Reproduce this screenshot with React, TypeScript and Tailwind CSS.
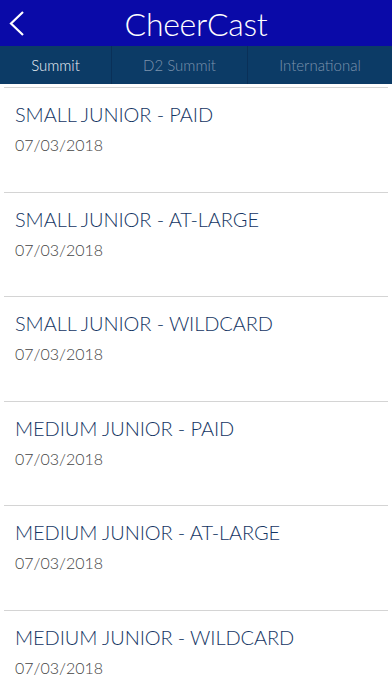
const TABS = ['Summit', 'D2 Summit', 'International']

const EVENTS = [
  'SMALL JUNIOR - PAID',
  'SMALL JUNIOR - AT-LARGE',
  'SMALL JUNIOR - WILDCARD',
  'MEDIUM JUNIOR - PAID',
  'MEDIUM JUNIOR - AT-LARGE',
  'MEDIUM JUNIOR - WILDCARD',
]

const FONT = { fontFamily: '"Lato", "Open Sans", sans-serif' }

export default function App() {
  return (
    <div className="w-[392px] h-[696px] overflow-hidden bg-white" style={FONT}>
      {/* Nav bar */}
      <div className="relative h-[46px] bg-[#0a0aa8] flex items-center justify-center">
        <button type="button" className="absolute left-[6px] top-[10px] w-[20px] h-[27px]">
          <svg viewBox="0 0 20 27" className="w-[20px] h-[27px]" fill="none" stroke="white" strokeWidth="2.2">
            <path d="M17 2 L5 13.5 L17 25" />
          </svg>
        </button>
        <span className="text-white text-[32px] font-light leading-none tracking-[-0.3px] mt-[1px]">CheerCast</span>
      </div>

      {/* Tabs */}
      <div className="h-[38px] bg-[#0c3b66] flex">
        {TABS.map((tab, i) => (
          <div
            key={tab}
            className={`flex items-center justify-center text-[15px] font-light ${
              i === 0 ? 'w-[111px] text-[#eef2f7]' : i === 1 ? 'w-[136px] text-[#7d93ad]' : 'flex-1 text-[#7d93ad]'
            } ${i > 0 ? 'border-l border-[#0a3058]' : ''}`}
          >
            {tab}
          </div>
        ))}
      </div>

      {/* List */}
      <div className="pt-[3px]">
        {EVENTS.map((name) => (
          <div key={name} className="mx-[4px] border-t border-[#d4d4d4] h-[104.6px] px-[11px] pt-[13px]">
            <div className="text-[#143563] text-[20px] font-light leading-[26px] tracking-[-0.1px]">{name}</div>
            <div className="text-[#454545] text-[16px] font-light leading-[20px] mt-[8px]">07/03/2018</div>
          </div>
        ))}
      </div>
    </div>
  )
}
